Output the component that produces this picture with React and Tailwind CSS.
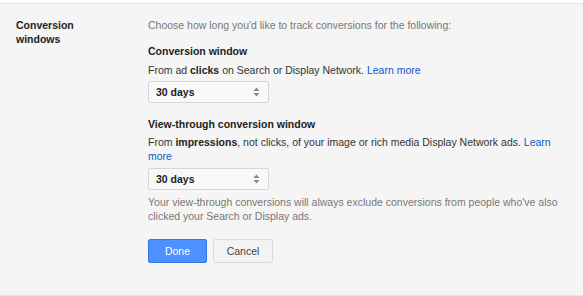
import React from 'react';

const font = { fontFamily: '"Liberation Sans", Arial, sans-serif' };

const Select = ({ value }) => (
    <div className="flex items-center justify-between w-[121px] h-[22px] pl-[7px] pr-[8px] bg-[#f8f8f8] border border-[#d6d6d6] rounded-[2px] text-[10.5px] font-bold text-[#222]">
        <span>{value}</span>
        <svg width="7" height="10" viewBox="0 0 7 10" className="text-[#888]">
            <path d="M3.5 0.5 L6.5 4 L0.5 4 Z" fill="currentColor" />
            <path d="M3.5 9.5 L6.5 6 L0.5 6 Z" fill="currentColor" />
        </svg>
    </div>
);

const App = () => {
    return (
        <div className="w-[583px] h-[296px] bg-white pt-[3px]" style={font}>
            <div className="flex h-[293px] bg-[#f5f5f5] border-t border-b border-[#e3e3e3] text-[10.5px] leading-[14px]">
                <div className="w-[148px] pl-[16px] pt-[14px] font-bold text-[#222]">
                    Conversion
                    <br />
                    windows
                </div>

                <div className="w-[414px] pt-[14px]">
                    <p className="text-[#777]">Choose how long you'd like to track conversions for the following:</p>

                    <h3 className="mt-[12px] font-bold text-[#222]">Conversion window</h3>
                    <p className="mt-[5px] text-[#333]">
                        From ad <b className="text-[#222]">clicks</b> on Search or Display Network.{' '}
                        <a href="#" className="text-[#1155cc]">Learn more</a>
                    </p>
                    <div className="mt-[4px]">
                        <Select value="30 days" />
                    </div>

                    <h3 className="mt-[14px] font-bold text-[#222]">View-through conversion window</h3>
                    <p className="mt-[4px] text-[#333]">
                        From <b className="text-[#222]">impressions</b>, not clicks, of your image or rich media Display Network ads.{' '}
                        <a href="#" className="text-[#1155cc]">Learn more</a>
                    </p>
                    <div className="mt-[5px]">
                        <Select value="30 days" />
                    </div>
                    <p className="mt-[5px] text-[#777]">
                        Your view-through conversions will always exclude conversions from people who've also clicked your Search or Display ads.
                    </p>

                    <div className="flex gap-[6px] mt-[16px]">
                        <button className="w-[59px] h-[24px] bg-[#4d90fe] border border-[#3079ed] rounded-[2px] text-white text-[10.5px]">
                            Done
                        </button>
                        <button className="w-[60px] h-[24px] bg-[#f3f3f3] border border-[#dcdcdc] rounded-[2px] text-[#444] text-[10.5px]">
                            Cancel
                        </button>
                    </div>
                </div>
            </div>
        </div>
    );
};

export default App;
